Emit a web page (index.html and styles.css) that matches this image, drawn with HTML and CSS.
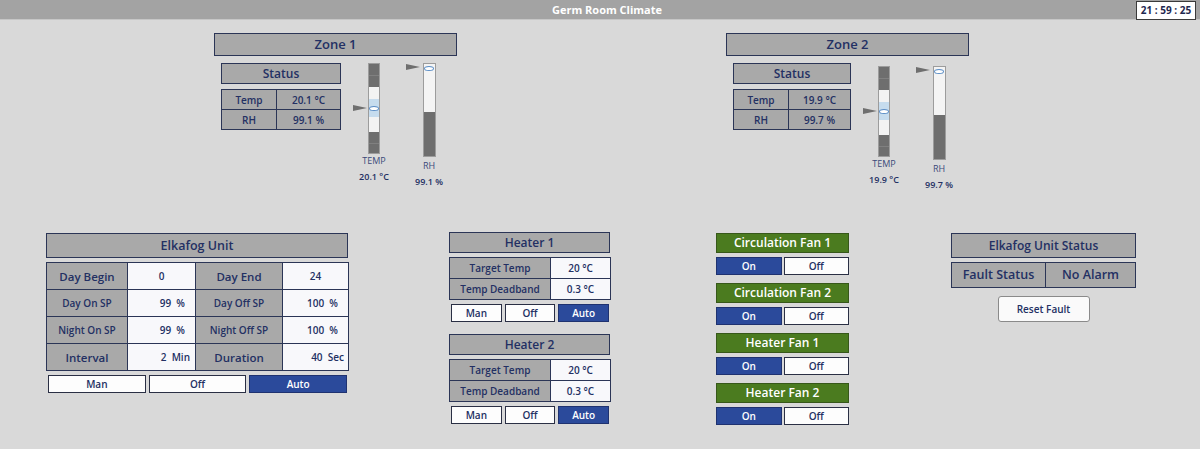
FILE: index.html
```html
<!DOCTYPE html>
<html>
<head>
<meta charset="utf-8">
<link rel="stylesheet" href="styles.css">
</head>
<body>
<div class="topbar">
  <div></div>
  <div class="title">Germ Room Climate</div>
  <div class="clock">21 : 59 : 25</div>
</div>

<div class="zones">
  <section class="zone">
    <div class="box zone-head">Zone 1</div>
    <div class="zone-body">
      <div class="status">
        <div class="box status-head">Status</div>
        <table class="status-table">
          <tr><td class="lbl">Temp</td><td class="val">20.1 °C</td></tr>
          <tr><td class="lbl">RH</td><td class="val">99.1 %</td></tr>
        </table>
      </div>
      <div class="gauges">
        <div class="gauge">
          <div class="bar bar-temp">
            <span class="pointer pointer-temp"></span>
            <span class="marker marker-temp"></span>
          </div>
          <div class="g-label g-label-temp">TEMP</div>
          <div class="g-value">20.1 °C</div>
        </div>
        <div class="gauge">
          <div class="bar bar-rh">
            <span class="pointer pointer-rh"></span>
            <span class="marker marker-rh"></span>
          </div>
          <div class="g-label g-label-rh">RH</div>
          <div class="g-value">99.1 %</div>
        </div>
      </div>
    </div>
  </section>

  <section class="zone zone-2">
    <div class="box zone-head">Zone 2</div>
    <div class="zone-body">
      <div class="status status-narrow">
        <div class="box status-head">Status</div>
        <table class="status-table">
          <tr><td class="lbl">Temp</td><td class="val">19.9 °C</td></tr>
          <tr><td class="lbl">RH</td><td class="val">99.7 %</td></tr>
        </table>
      </div>
      <div class="gauges">
        <div class="gauge">
          <div class="bar bar-temp">
            <span class="pointer pointer-temp"></span>
            <span class="marker marker-temp"></span>
          </div>
          <div class="g-label g-label-temp">TEMP</div>
          <div class="g-value">19.9 °C</div>
        </div>
        <div class="gauge">
          <div class="bar bar-rh">
            <span class="pointer pointer-rh"></span>
            <span class="marker marker-rh"></span>
          </div>
          <div class="g-label g-label-rh">RH</div>
          <div class="g-value">99.7 %</div>
        </div>
      </div>
    </div>
  </section>
</div>

<div class="bottom">
  <section class="elka">
    <div class="box elka-head">Elkafog Unit</div>
    <table class="grid-table elka-table">
      <colgroup><col class="c1"><col class="c2"><col class="c3"><col class="c4"></colgroup>
      <tr class="r-big">
        <td class="lbl">Day Begin</td><td class="val center">0</td>
        <td class="lbl">Day End</td><td class="val center">24</td>
      </tr>
      <tr>
        <td class="lbl">Day On SP</td><td class="val right">99 &nbsp;%</td>
        <td class="lbl">Day Off SP</td><td class="val right r2">100 &nbsp;%</td>
      </tr>
      <tr>
        <td class="lbl">Night On SP</td><td class="val right">99 &nbsp;%</td>
        <td class="lbl">Night Off SP</td><td class="val right r2">100 &nbsp;%</td>
      </tr>
      <tr class="r-big">
        <td class="lbl">Interval</td><td class="val right r3">2 &nbsp;Min</td>
        <td class="lbl">Duration</td><td class="val right r4">40 &nbsp;Sec</td>
      </tr>
    </table>
    <div class="modes modes-elka">
      <div class="btn">Man</div>
      <div class="btn">Off</div>
      <div class="btn btn-on">Auto</div>
    </div>
  </section>

  <section class="heaters">
    <div class="heater">
      <div class="box heater-head">Heater 1</div>
      <table class="grid-table heater-table">
        <colgroup><col class="h1"><col class="h2"></colgroup>
        <tr><td class="lbl">Target Temp</td><td class="val center">20 °C</td></tr>
        <tr><td class="lbl">Temp Deadband</td><td class="val center">0.3 °C</td></tr>
      </table>
      <div class="modes modes-heater">
        <div class="btn">Man</div>
        <div class="btn">Off</div>
        <div class="btn btn-on">Auto</div>
      </div>
    </div>
    <div class="heater">
      <div class="box heater-head">Heater 2</div>
      <table class="grid-table heater-table">
        <colgroup><col class="h1"><col class="h2"></colgroup>
        <tr><td class="lbl">Target Temp</td><td class="val center">20 °C</td></tr>
        <tr><td class="lbl">Temp Deadband</td><td class="val center">0.3 °C</td></tr>
      </table>
      <div class="modes modes-heater">
        <div class="btn">Man</div>
        <div class="btn">Off</div>
        <div class="btn btn-on">Auto</div>
      </div>
    </div>
  </section>

  <section class="fans">
    <div class="fan">
      <div class="fan-head">Circulation Fan 1</div>
      <div class="onoff"><div class="btn btn-on">On</div><div class="btn">Off</div></div>
    </div>
    <div class="fan">
      <div class="fan-head">Circulation Fan 2</div>
      <div class="onoff"><div class="btn btn-on">On</div><div class="btn">Off</div></div>
    </div>
    <div class="fan">
      <div class="fan-head">Heater Fan 1</div>
      <div class="onoff"><div class="btn btn-on">On</div><div class="btn">Off</div></div>
    </div>
    <div class="fan">
      <div class="fan-head">Heater Fan 2</div>
      <div class="onoff"><div class="btn btn-on">On</div><div class="btn">Off</div></div>
    </div>
  </section>

  <section class="unit-status">
    <div class="box us-head">Elkafog Unit Status</div>
    <div class="us-row">
      <div class="us-cell">Fault Status</div>
      <div class="us-cell">No Alarm</div>
    </div>
    <div class="reset">Reset Fault</div>
  </section>
</div>
</body>
</html>
```

FILE: styles.css
```css
* { box-sizing: border-box; }

html, body {
  margin: 0;
  padding: 0;
}

body {
  width: 1200px;
  height: 449px;
  overflow: hidden;
  background: #d9d9d9;
  font-family: "Open Sans", "Liberation Sans", sans-serif;
  color: #233063;
}

/* ---------- top bar ---------- */
.topbar {
  height: 20px;
  background: #a3a3a3;
  border-bottom: 1px solid #c6c6c6;
  display: grid;
  grid-template-columns: 1fr auto 1fr;
  align-items: start;
}

.title {
  color: #ffffff;
  font-size: 11px;
  font-weight: 700;
  line-height: 19px;
  padding-left: 14px;
}

.clock {
  justify-self: end;
  margin-top: 1px;
  margin-right: 4px;
  width: 60px;
  height: 19px;
  background: #ffffff;
  border: 1px solid #3a3a3a;
  font-size: 10px;
  font-weight: 700;
  line-height: 17px;
  text-align: center;
  color: #1e2850;
}

/* ---------- generic ---------- */
.box {
  background: #a9a9a9;
  border: 1px solid #2b3556;
  text-align: center;
  font-weight: 600;
}

.grid-table,
.status-table {
  border-collapse: collapse;
  table-layout: fixed;
}

.grid-table td,
.status-table td {
  border: 1px solid #2b3556;
  padding: 0;
  font-weight: 600;
}

.lbl {
  background: #a9a9a9;
  text-align: center;
}

.val {
  background: #f8f8fb;
}

.center { text-align: center; }
.right { text-align: right; padding-right: 10px !important; }

/* ---------- zones ---------- */
.zones {
  height: 212px;
  padding-top: 13px;
  padding-left: 214px;
  display: flex;
  gap: 269px;
}

.zone {
  width: 243px;
}

.zone-head {
  height: 23px;
  font-size: 13px;
  line-height: 21px;
}

.zone-body {
  display: flex;
  align-items: flex-start;
  margin-top: 7px;
  padding-left: 7px;
}

.status {
  width: 120px;
}

.status-narrow {
  width: 118px;
}

.status-head {
  height: 21px;
  font-size: 12px;
  line-height: 19px;
}

.status-table {
  width: 100%;
  margin-top: 5px;
  background: #a9a9a9;
}

.status-table td {
  height: 20px;
  font-size: 10px;
  text-align: center;
  background: #a9a9a9;
}

.status-table td.lbl { width: 55px; }

.gauges {
  display: flex;
  margin-left: 13px;
  gap: 15px;
}

.zone-2 .gauges {
  padding-top: 3px;
}

.gauge {
  width: 40px;
  display: flex;
  flex-direction: column;
  align-items: center;
}

.bar {
  position: relative;
  width: 12px;
  border: 1px solid #9c9c9c;
}

.bar-temp {
  height: 91px;
  background: linear-gradient(to bottom,
    #6e6e6e 0, #6e6e6e 11px, #808080 11px, #808080 12px, #6e6e6e 12px, #6e6e6e 23px,
    #f3f3f3 23px, #f3f3f3 35px,
    #c6dcee 35px, #c6dcee 53px,
    #f3f3f3 53px, #f3f3f3 68px,
    #6e6e6e 68px, #6e6e6e 79px, #808080 79px, #808080 80px, #6e6e6e 80px);
}

.bar-rh {
  width: 13px;
  height: 94px;
  background: linear-gradient(to bottom, #f4f4f4 0, #f4f4f4 48px, #6e6e6e 48px);
}

.pointer {
  position: absolute;
  width: 0;
  height: 0;
  border-top: 3.5px solid transparent;
  border-bottom: 3.5px solid transparent;
  border-left: 14px solid #6f6f6f;
}

.pointer-temp {
  left: -16px;
  top: 41px;
}

.pointer-rh {
  left: -18px;
  top: 0px;
}

.marker {
  position: absolute;
  left: 0px;
  width: 10px;
  height: 5px;
  border-radius: 50%;
  background: #ffffff;
  border: 1px solid #5b8ec6;
}

.marker-temp { top: 42px; }
.marker-rh { top: 2px; left: 0.5px; }

.g-label {
  font-size: 9px;
  font-weight: 400;
  line-height: 11px;
  color: #3c4a7a;
}

.g-label-temp { margin-top: 1px; }
.g-label-rh { margin-top: 3px; }

.g-value {
  margin-top: 5px;
  font-size: 9px;
  font-weight: 600;
  line-height: 11px;
}

/* ---------- bottom row ---------- */
.bottom {
  display: flex;
  align-items: flex-start;
  padding-left: 46px;
}

.elka {
  width: 302px;
  margin-top: 1px;
}

.elka-head {
  height: 25px;
  font-size: 12.5px;
  line-height: 23px;
}

.elka-table {
  width: 302px;
  margin-top: 4px;
}

.elka-table col.c1 { width: 81px; }
.elka-table col.c2 { width: 68px; }
.elka-table col.c3 { width: 87px; }
.elka-table col.c4 { width: 66px; }

.elka-table td {
  height: 27px;
  font-size: 10px;
}

.elka-table td.lbl {
  font-size: 10px;
}

.elka-table tr.r-big td.lbl {
  font-size: 11.5px;
}

.elka-table tr.r-big td.val {
  font-size: 10px;
}

.elka-table td.r2 { padding-right: 10px !important; }
.elka-table td.r3 { padding-right: 5px !important; }
.elka-table td.r4 { padding-right: 4px !important; }

.modes {
  display: flex;
  margin-top: 4px;
}

.modes-elka {
  margin-left: 2px;
  width: 299px;
  gap: 3px;
}

.btn {
  flex: 1;
  height: 18px;
  background: #fdfdfd;
  border: 1px solid #2a2f44;
  font-size: 10px;
  font-weight: 600;
  line-height: 16px;
  text-align: center;
  color: #233063;
}

.btn-on {
  background: #2b4a9b;
  border-color: #1f3270;
  color: #ffffff;
}

/* heaters */
.heaters {
  width: 161px;
  margin-left: 101px;
  display: flex;
  flex-direction: column;
  gap: 12px;
}

.heater-head {
  height: 21px;
  font-size: 12px;
  line-height: 19px;
}

.heater-table {
  width: 161px;
  margin-top: 4px;
}

.heater-table col.h1 { width: 101px; }
.heater-table col.h2 { width: 60px; }

.heater-table td {
  height: 21px;
  font-size: 10px;
}

.heater-table td.lbl {
  font-size: 10px;
}

.modes-heater {
  margin-left: 2px;
  width: 158px;
  gap: 3px;
}

/* fans */
.fans {
  width: 133px;
  margin-left: 106px;
  margin-top: 1px;
  display: flex;
  flex-direction: column;
  gap: 8px;
}

.fan-head {
  height: 20px;
  background: #4b7b1f;
  border: 1px solid #37581a;
  color: #ffffff;
  font-size: 12px;
  font-weight: 600;
  line-height: 18px;
  text-align: center;
}

.onoff {
  display: flex;
  gap: 2px;
  margin-top: 4px;
}

/* unit status */
.unit-status {
  width: 185px;
  margin-left: 102px;
  margin-top: 1px;
  display: flex;
  flex-direction: column;
  align-items: center;
}

.us-head {
  width: 100%;
  height: 25px;
  font-size: 12px;
  line-height: 23px;
}

.us-row {
  width: 100%;
  height: 26px;
  margin-top: 4px;
  display: grid;
  grid-template-columns: 93px 1fr;
  border: 1px solid #2b3556;
  background: #a9a9a9;
}

.us-cell {
  font-size: 12.5px;
  font-weight: 600;
  line-height: 24px;
  text-align: center;
}

.us-cell + .us-cell {
  border-left: 1px solid #2b3556;
}

.reset {
  margin-top: 8px;
  width: 92px;
  height: 26px;
  background: #fafafa;
  border: 1px solid #8a8a8a;
  border-radius: 3px;
  font-size: 10px;
  font-weight: 600;
  line-height: 24px;
  text-align: center;
  color: #233063;
}
```
